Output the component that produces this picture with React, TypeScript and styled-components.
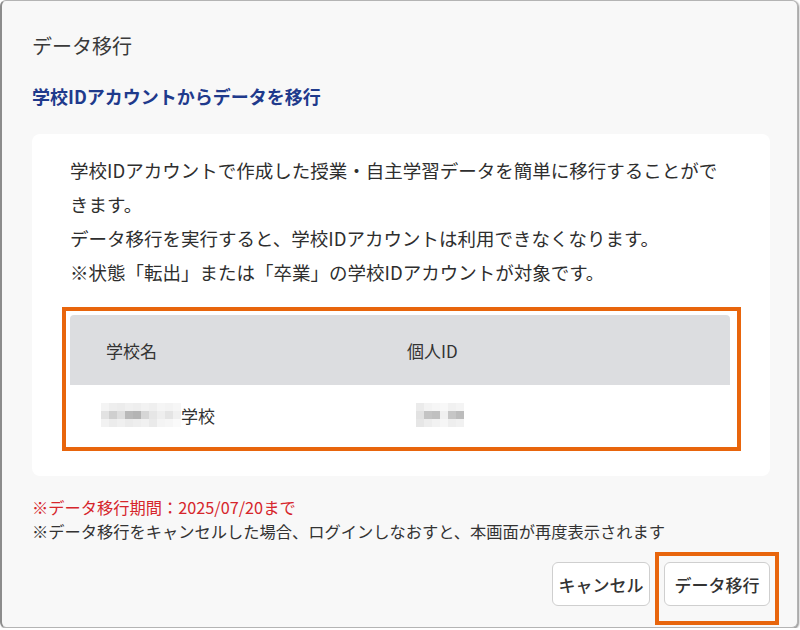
import styled, { createGlobalStyle } from "styled-components";

const GlobalStyle = createGlobalStyle`
    html, body {
        margin: 0;
        padding: 0;
        background: #ffffff;
    }

    * {
        box-sizing: border-box;
    }
`;

const Dialog = styled.div`
    width: 798px;
    height: 628px;
    background: #f8f8f8;
    border: 1px solid #b4b4b4;
    border-left: 2px solid #8c8c8c;
    border-radius: 6px;
    box-shadow: 1px 1px 2px rgba(0, 0, 0, 0.45);
    padding: 31px 27px 0 30px;
    display: flex;
    flex-direction: column;
    font-family: "Noto Sans CJK JP", "Noto Sans", sans-serif;
    color: #333333;
`;

const Title = styled.h1`
    margin: 0;
    font-size: 20px;
    line-height: 28px;
    font-weight: 400;
    color: #3a3a3a;
`;

const Subtitle = styled.h2`
    margin: 23px 0 0;
    font-size: 18px;
    line-height: 26px;
    font-weight: 700;
    color: #1f3a8c;
`;

const Card = styled.section`
    margin-top: 25px;
    background: #ffffff;
    border-radius: 8px;
    padding: 19px 40px 31px 38px;
`;

const Lead = styled.p`
    margin: 0;
    font-size: 18.5px;
    line-height: 34px;
    color: #2e2e2e;
`;

const Highlight = styled.div<{ $pad: string; $pull: string }>`
    border: 4px solid #e8650c;
    padding: ${(p) => p.$pad};
    margin: ${(p) => p.$pull};
`;

const TableBox = styled.div`
    margin-top: 18px;
`;

const Table = styled.div`
    display: grid;
    grid-template-columns: 301px 1fr;
`;

const HeadCell = styled.div<{ $first?: boolean }>`
    height: 70px;
    display: flex;
    align-items: center;
    padding-left: 36px;
    background: #dcdde0;
    font-size: 17px;
    color: #333333;
    border-top-left-radius: ${(p) => (p.$first ? "4px" : "0")};
    border-top-right-radius: ${(p) => (p.$first ? "0" : "4px")};
`;

const BodyCell = styled.div<{ $indent: number }>`
    height: 60px;
    display: flex;
    align-items: center;
    padding-left: ${(p) => p.$indent}px;
    background: #ffffff;
    font-size: 17px;
    color: #333333;
`;

const Mosaic = styled.span<{ $cols: number }>`
    display: inline-grid;
    grid-template-columns: repeat(${(p) => p.$cols}, 8px);
    grid-auto-rows: 8px;
`;

const Tile = styled.span<{ $shade: string }>`
    background: ${(p) => p.$shade};
`;

const Notes = styled.div`
    margin-top: 19px;
    font-size: 16.25px;
    line-height: 24px;
`;

const Note = styled.p<{ $alert?: boolean }>`
    margin: 0;
    color: ${(p) => (p.$alert ? "#d6262c" : "#333333")};
`;

const Actions = styled.div`
    margin-top: 19px;
    display: flex;
    justify-content: flex-end;
    align-items: flex-start;
    gap: 14px;
`;

const Button = styled.button<{ $width: number }>`
    width: ${(p) => p.$width}px;
    height: 44px;
    padding: 0;
    white-space: nowrap;
    background: #ffffff;
    border: 1px solid #cfcfcf;
    border-radius: 6px;
    font-family: "Noto Sans CJK JP", "Noto Sans", sans-serif;
    font-size: 17px;
    font-weight: 500;
    color: #333333;
    cursor: pointer;
`;

const schoolTiles = [
    "#f4f4f4", "#eeeeee", "#ececec", "#f0f0f0", "#eeeeee", "#f2f2f2", "#efefef", "#f5f5f5", "#f3f3f3", "#f6f6f6",
    "#e2e2e2", "#cfcfcf", "#dedede", "#b9b9b9", "#b4b4b4", "#d6d6d6", "#e6e6e6", "#eeeeee", "#e4e4e4", "#f0f0f0",
    "#f2f2f2", "#ececec", "#f0f0f0", "#ebebeb", "#eeeeee", "#f1f1f1", "#eaeaea", "#f4f4f4", "#f6f6f6", "#fafafa",
];

const idTiles = [
    "#ebebeb", "#f3f3f3", "#f6f6f6", "#f8f8f8", "#f1f1f1", "#f4f4f4",
    "#e2e2e2", "#c4c4c4", "#c0c0c0", "#f0f0f0", "#c6c6c6", "#bcbcbc",
    "#e6e6e6", "#ededed", "#f2f2f2", "#f6f6f6", "#eeeeee", "#f1f1f1",
];

const App = () => {
    return (
        <>
            <GlobalStyle />
            <Dialog>
                <Title>データ移行</Title>
                <Subtitle>学校IDアカウントからデータを移行</Subtitle>

                <Card>
                    <Lead>学校IDアカウントで作成した授業・自主学習データを簡単に移行することができます。</Lead>
                    <Lead>データ移行を実行すると、学校IDアカウントは利用できなくなります。</Lead>
                    <Lead>※状態「転出」または「卒業」の学校IDアカウントが対象です。</Lead>

                    <TableBox>
                        <Highlight $pad="4px 7px 2px 4px" $pull="0 -11px -6px -8px">
                            <Table>
                                <HeadCell $first>学校名</HeadCell>
                                <HeadCell>個人ID</HeadCell>
                                <BodyCell $indent={31}>
                                    <Mosaic $cols={10}>
                                        {schoolTiles.map((c, i) => (
                                            <Tile key={i} $shade={c} />
                                        ))}
                                    </Mosaic>
                                    学校
                                </BodyCell>
                                <BodyCell $indent={45}>
                                    <Mosaic $cols={6}>
                                        {idTiles.map((c, i) => (
                                            <Tile key={i} $shade={c} />
                                        ))}
                                    </Mosaic>
                                </BodyCell>
                            </Table>
                        </Highlight>
                    </TableBox>
                </Card>

                <Notes>
                    <Note $alert>※データ移行期間：2025/07/20まで</Note>
                    <Note>※データ移行をキャンセルした場合、ログインしなおすと、本画面が再度表示されます</Note>
                </Notes>

                <Actions>
                    <Button $width={98}>キャンセル</Button>
                    <Highlight $pad="6px 5px 15px 5px" $pull="-10px -9px -19px -9px">
                        <Button $width={106}>データ移行</Button>
                    </Highlight>
                </Actions>
            </Dialog>
        </>
    );
};

export default App;
